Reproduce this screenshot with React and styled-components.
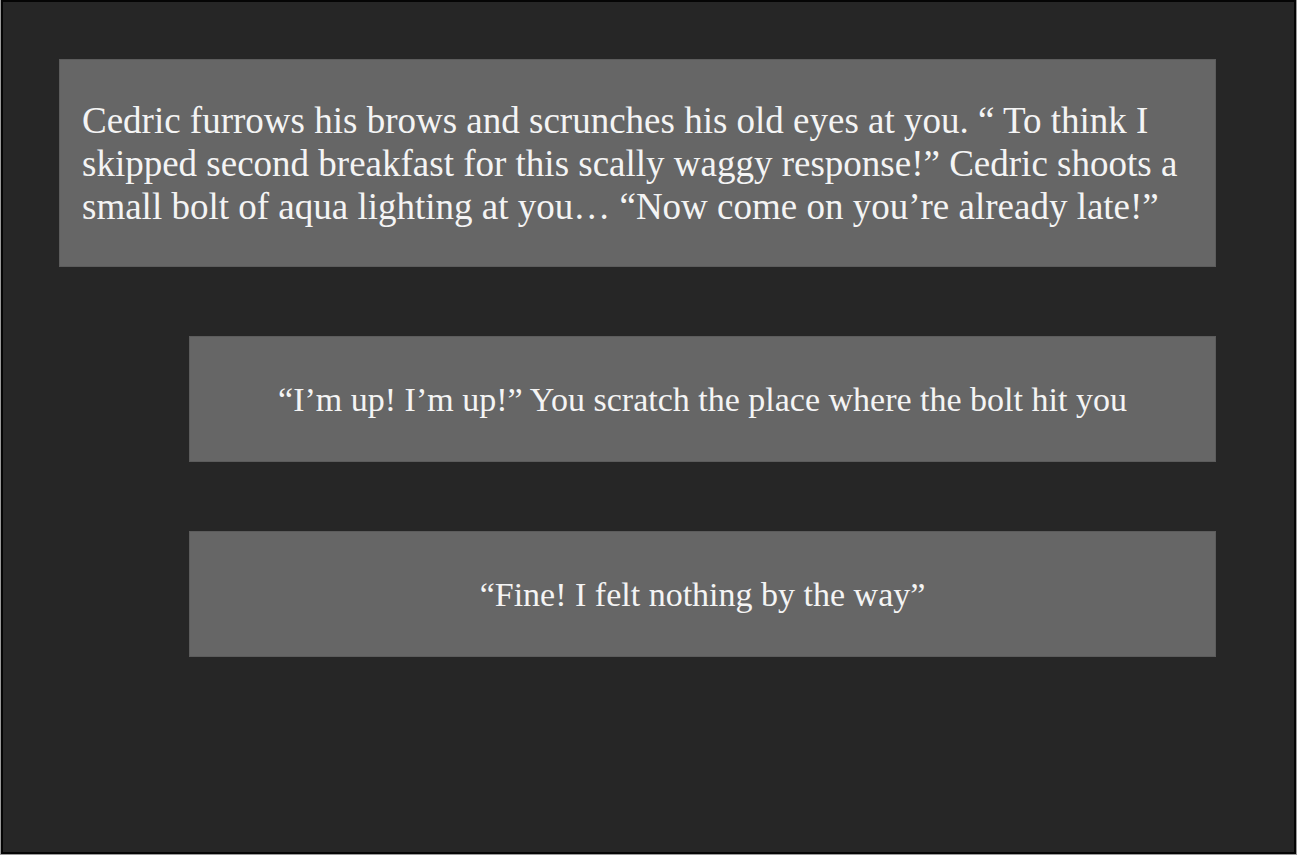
import React from "react";
import styled, { createGlobalStyle } from "styled-components";

const Global = createGlobalStyle`
  html, body { margin: 0; padding: 0; background: #9a9a9a; }
  * { box-sizing: border-box; }
`;

const Frame = styled.div`
  width: 1295px;
  height: 854px;
  margin: 0 1px;
  border: 2px solid #050505;
  background: #262626;
  padding: 57px 78px 0 56px;
  display: flex;
  flex-direction: column;
  gap: 69px;
  font-family: "Liberation Serif", "Times New Roman", serif;
  color: #f4f4f4;
`;

const Card = styled.div`
  background: #666666;
  border: 1px solid #5c5c5c;
  margin-left: ${(p) => p.$indent || 0}px;
  min-height: ${(p) => p.$h}px;
  padding: ${(p) => (p.$center ? "0 20px" : "0 14px 0 22px")};
  display: flex;
  align-items: center;
  justify-content: ${(p) => (p.$center ? "center" : "flex-start")};
  text-align: ${(p) => (p.$center ? "center" : "left")};
  font-size: ${(p) => p.$size}px;
  line-height: 43px;
`;

const Text = styled.p`
  margin: 0;
`;

export default function App() {
  return (
    <>
      <Global />
      <Frame>
        <Card $h={208} $size={37}>
          <Text>
            Cedric furrows his brows and scrunches his old eyes at you. “ To think I skipped second
            breakfast for this scally waggy response!” Cedric shoots a small bolt of aqua lighting at
            you… “Now come on you’re already late!”
          </Text>
        </Card>
        <Card $h={126} $indent={130} $size={34} $center>
          <Text>“I’m up! I’m up!” You scratch the place where the bolt hit you</Text>
        </Card>
        <Card $h={126} $indent={130} $size={34} $center>
          <Text>“Fine! I felt nothing by the way”</Text>
        </Card>
      </Frame>
    </>
  );
}
